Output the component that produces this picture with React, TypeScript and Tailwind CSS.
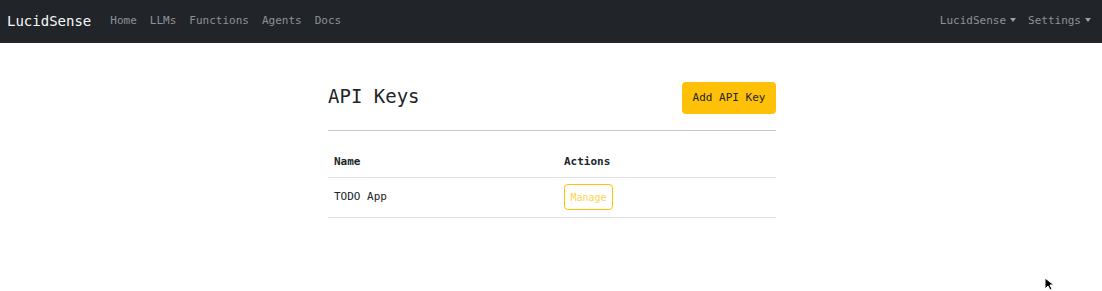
import React from "react";

function Caret() {
  return <span className="ml-[4px] inline-block align-middle border-x-[3px] border-x-transparent border-t-[4px] border-t-[#9aa0a6] mb-[3px]" />;
}

export default function App() {
  const mono = { fontFamily: '"DejaVu Sans Mono", monospace' };
  return (
    <div className="min-h-[291px] bg-white relative" style={mono}>
      <nav className="h-[43px] bg-[#212529] flex items-center justify-between pl-[7px] pr-[11px]">
        <div className="flex items-center">
          <span className="text-[14px] text-[#f8f9fa]">LucidSense</span>
          <div className="flex items-center gap-[13px] ml-[19px] text-[11px] text-[#8e9297]">
            <span>Home</span>
            <span>LLMs</span>
            <span>Functions</span>
            <span>Agents</span>
            <span>Docs</span>
          </div>
        </div>
        <div className="flex items-center gap-[12px] text-[11px] text-[#8e9297]">
          <span className="flex items-center">LucidSense<Caret /></span>
          <span className="flex items-center">Settings<Caret /></span>
        </div>
      </nav>
      <div className="flex justify-center pl-[2px]">
        <main className="w-[448px]">
          <div className="flex items-center justify-between pt-[39px] pb-[16px] border-b border-[#c6c6c6]">
            <h1 className="text-[19px] text-[#212529] leading-none -mt-[3px]">API Keys</h1>
            <button className="h-[32px] w-[94px] rounded-[4px] bg-[#ffc107] text-[11px] text-[#212529]">Add API Key</button>
          </div>
          <table className="w-full mt-[16px] text-[11px] text-[#212529] border-collapse">
            <thead>
              <tr className="border-b border-[#dee2e6]">
                <th className="text-left font-bold px-[6px] h-[30px] w-[230px]">Name</th>
                <th className="text-left font-bold px-[6px] h-[30px]">Actions</th>
              </tr>
            </thead>
            <tbody>
              <tr className="border-b border-[#dee2e6]">
                <td className="px-[6px] h-[40px]">TODO App</td>
                <td className="px-[6px] h-[40px]">
                  <button className="h-[26px] w-[49px] rounded-[4px] border border-[#ffc107] text-[10px] text-[#ffd154]">Manage</button>
                </td>
              </tr>
            </tbody>
          </table>
        </main>
      </div>
      <svg className="absolute left-[1044px] top-[277px]" width="12" height="14" viewBox="0 0 12 14">
        <path d="M1 1 L1 12 L4 9 L6 13 L8 12 L6 8 L10 8 Z" fill="#000" stroke="#fff" strokeWidth="1" />
      </svg>
    </div>
  );
}
